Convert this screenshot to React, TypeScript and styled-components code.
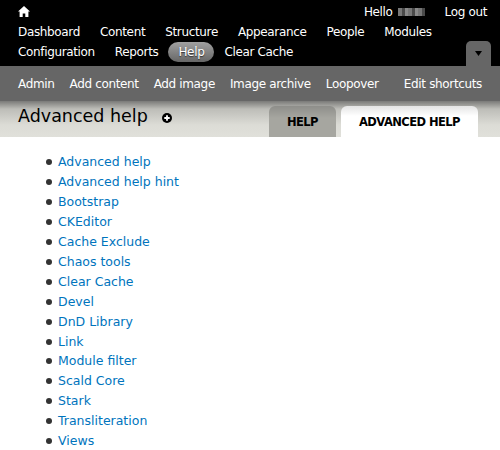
import * as React from 'react';
import styled, { createGlobalStyle } from 'styled-components';

const mainLinks = [
  'Dashboard', 'Content', 'Structure', 'Appearance', 'People', 'Modules',
  'Configuration', 'Reports', 'Help', 'Clear Cache',
];
const shortcuts = ['Admin', 'Add content', 'Add image', 'Image archive', 'Loopover'];
const modules = [
  'Advanced help', 'Advanced help hint', 'Bootstrap', 'CKEditor', 'Cache Exclude', 'Chaos tools',
  'Clear Cache', 'Devel', 'DnD Library', 'Link', 'Module filter', 'Scald Core', 'Stark',
  'Transliteration', 'Views',
];

const App = () => (
  <>
    <GlobalStyle />
    <Toolbar>
      <TopRow>
        <HomeIcon viewBox="0 0 12 11">
          <path d="M6 0 L12 5.6 L10.4 5.6 L10.4 11 L7.3 11 L7.3 7.4 L4.7 7.4 L4.7 11 L1.6 11 L1.6 5.6 L0 5.6 Z" fill="#fff" />
        </HomeIcon>
        <UserBox>
          <span>Hello</span>
          <BlurName />
          <LogOut>Log out</LogOut>
        </UserBox>
      </TopRow>
      <MainMenu>
        {mainLinks.map((link) => (
          <MainLink key={link} $active={link === 'Help'}>
            {link}
          </MainLink>
        ))}
      </MainMenu>
      <DrawerToggle>
        <svg width="10" height="5" viewBox="0 0 10 5">
          <path d="M1 0 H8 L4.5 5 Z" fill="#000" />
        </svg>
      </DrawerToggle>
    </Toolbar>
    <Shortcuts>
      {shortcuts.map((link) => (
        <Shortcut key={link}>{link}</Shortcut>
      ))}
      <EditShortcuts>Edit shortcuts</EditShortcuts>
    </Shortcuts>
    <PageHeader>
      <Title>
        Advanced help
        <AddIcon viewBox="0 0 11 11">
          <circle cx="5.5" cy="5.5" r="5.5" fill="#000" />
          <path d="M5.5 2.5 V8.5 M2.5 5.5 H8.5" stroke="#fff" strokeWidth="2" />
        </AddIcon>
      </Title>
      <Tabs>
        <Tab>HELP</Tab>
        <Tab $active>ADVANCED HELP</Tab>
      </Tabs>
    </PageHeader>
    <ModuleList>
      {modules.map((name) => (
        <ModuleItem key={name}>
          <ModuleLink>{name}</ModuleLink>
        </ModuleItem>
      ))}
    </ModuleList>
  </>
);

export default App;

const GlobalStyle = createGlobalStyle`
  html, body {
    margin: 0;
    background: #fff;
    font-family: 'DejaVu Sans', Verdana, sans-serif;
    font-size: 13px;
  }
`;

const Toolbar = styled.div`
  position: relative;
  height: 66px;
  padding: 0 18px;
  box-sizing: border-box;
  background: #000;
  color: #fff;
`;

const TopRow = styled.div`
  display: flex;
  justify-content: space-between;
  align-items: center;
  height: 22px;
`;

const HomeIcon = styled.svg`
  width: 12px;
  height: 11px;
`;

const UserBox = styled.div`
  display: flex;
  align-items: center;
  line-height: 22px;
  margin: 2px -5px 0 0;
  font-size: 12px;
  letter-spacing: -0.35px;
`;

const BlurName = styled.span`
  width: 27px;
  height: 8px;
  margin-left: 5px;
  background: repeating-linear-gradient(90deg, #777 0 4px, #4a4a4a 4px 7px, #8a8a8a 7px 10px);
`;

const LogOut = styled.span`
  margin-left: 20px;
`;

const MainMenu = styled.div`
  display: flex;
  flex-wrap: wrap;
  width: 420px;
  column-gap: 20px;
`;

const MainLink = styled.span<{ $active?: boolean }>`
  height: 20px;
  line-height: 20px;
  font-size: 12px;
  letter-spacing: -0.35px;
  white-space: nowrap;
  ${({ $active }) =>
    $active &&
    `
    margin: 0 -10px;
    padding: 0 10px;
    border-radius: 10px;
    background: linear-gradient(#a0a0a0, #666);
    text-shadow: 0 1px 1px #333;
  `}
`;

const DrawerToggle = styled.div`
  position: absolute;
  right: 9px;
  bottom: 0;
  width: 25px;
  height: 25px;
  display: flex;
  align-items: center;
  justify-content: center;
  border-radius: 5px 5px 0 0;
  background: #666;
`;

const Shortcuts = styled.div`
  display: flex;
  align-items: center;
  height: 35px;
  padding: 0 18px;
  box-sizing: border-box;
  gap: 15px;
  background: #666;
  color: #fff;
  font-size: 12px;
  letter-spacing: -0.35px;
  white-space: nowrap;
`;

const Shortcut = styled.span``;

const EditShortcuts = styled.span`
  margin-left: auto;
`;

const PageHeader = styled.div`
  display: flex;
  justify-content: space-between;
  align-items: flex-end;
  height: 36px;
  padding: 0 22px 0 18px;
  background: linear-gradient(#7a7a78 0, #bdbdb8 8px, #dcdcd6 24px, #e0e0da 100%);
`;

const Title = styled.h1`
  display: flex;
  align-items: center;
  align-self: flex-start;
  margin: 3px 0 0;
  font-size: 17.5px;
  font-weight: normal;
  line-height: 24px;
  color: #000;
`;

const AddIcon = styled.svg`
  width: 10px;
  height: 10px;
  margin: 3px 0 0 14px;
`;

const Tabs = styled.div`
  display: flex;
  gap: 5px;
`;

const Tab = styled.div<{ $active?: boolean }>`
  height: 31px;
  line-height: 32px;
  padding: 0 18px;
  box-sizing: border-box;
  border-radius: 6px 6px 0 0;
  font-size: 11.5px;
  letter-spacing: -0.55px;
  font-weight: bold;
  color: #000;
  background: ${({ $active }) =>
    $active ? 'linear-gradient(#e4e4e4, #fff 10px)' : 'linear-gradient(#8e8e8a, #a6a6a0 12px)'};
`;

const ModuleList = styled.ul`
  margin: 15.15px 0 0;
  padding: 0 0 0 46px;
  list-style: none;
`;

const ModuleItem = styled.li`
  display: flex;
  align-items: center;
  height: 19.95px;
  line-height: 20px;

  &::before {
    content: '';
    width: 6px;
    height: 6px;
    margin-right: 6px;
    border-radius: 50%;
    background: #333;
  }
`;

const ModuleLink = styled.a`
  color: #0074bd;
  font-size: 12.5px;
`;
